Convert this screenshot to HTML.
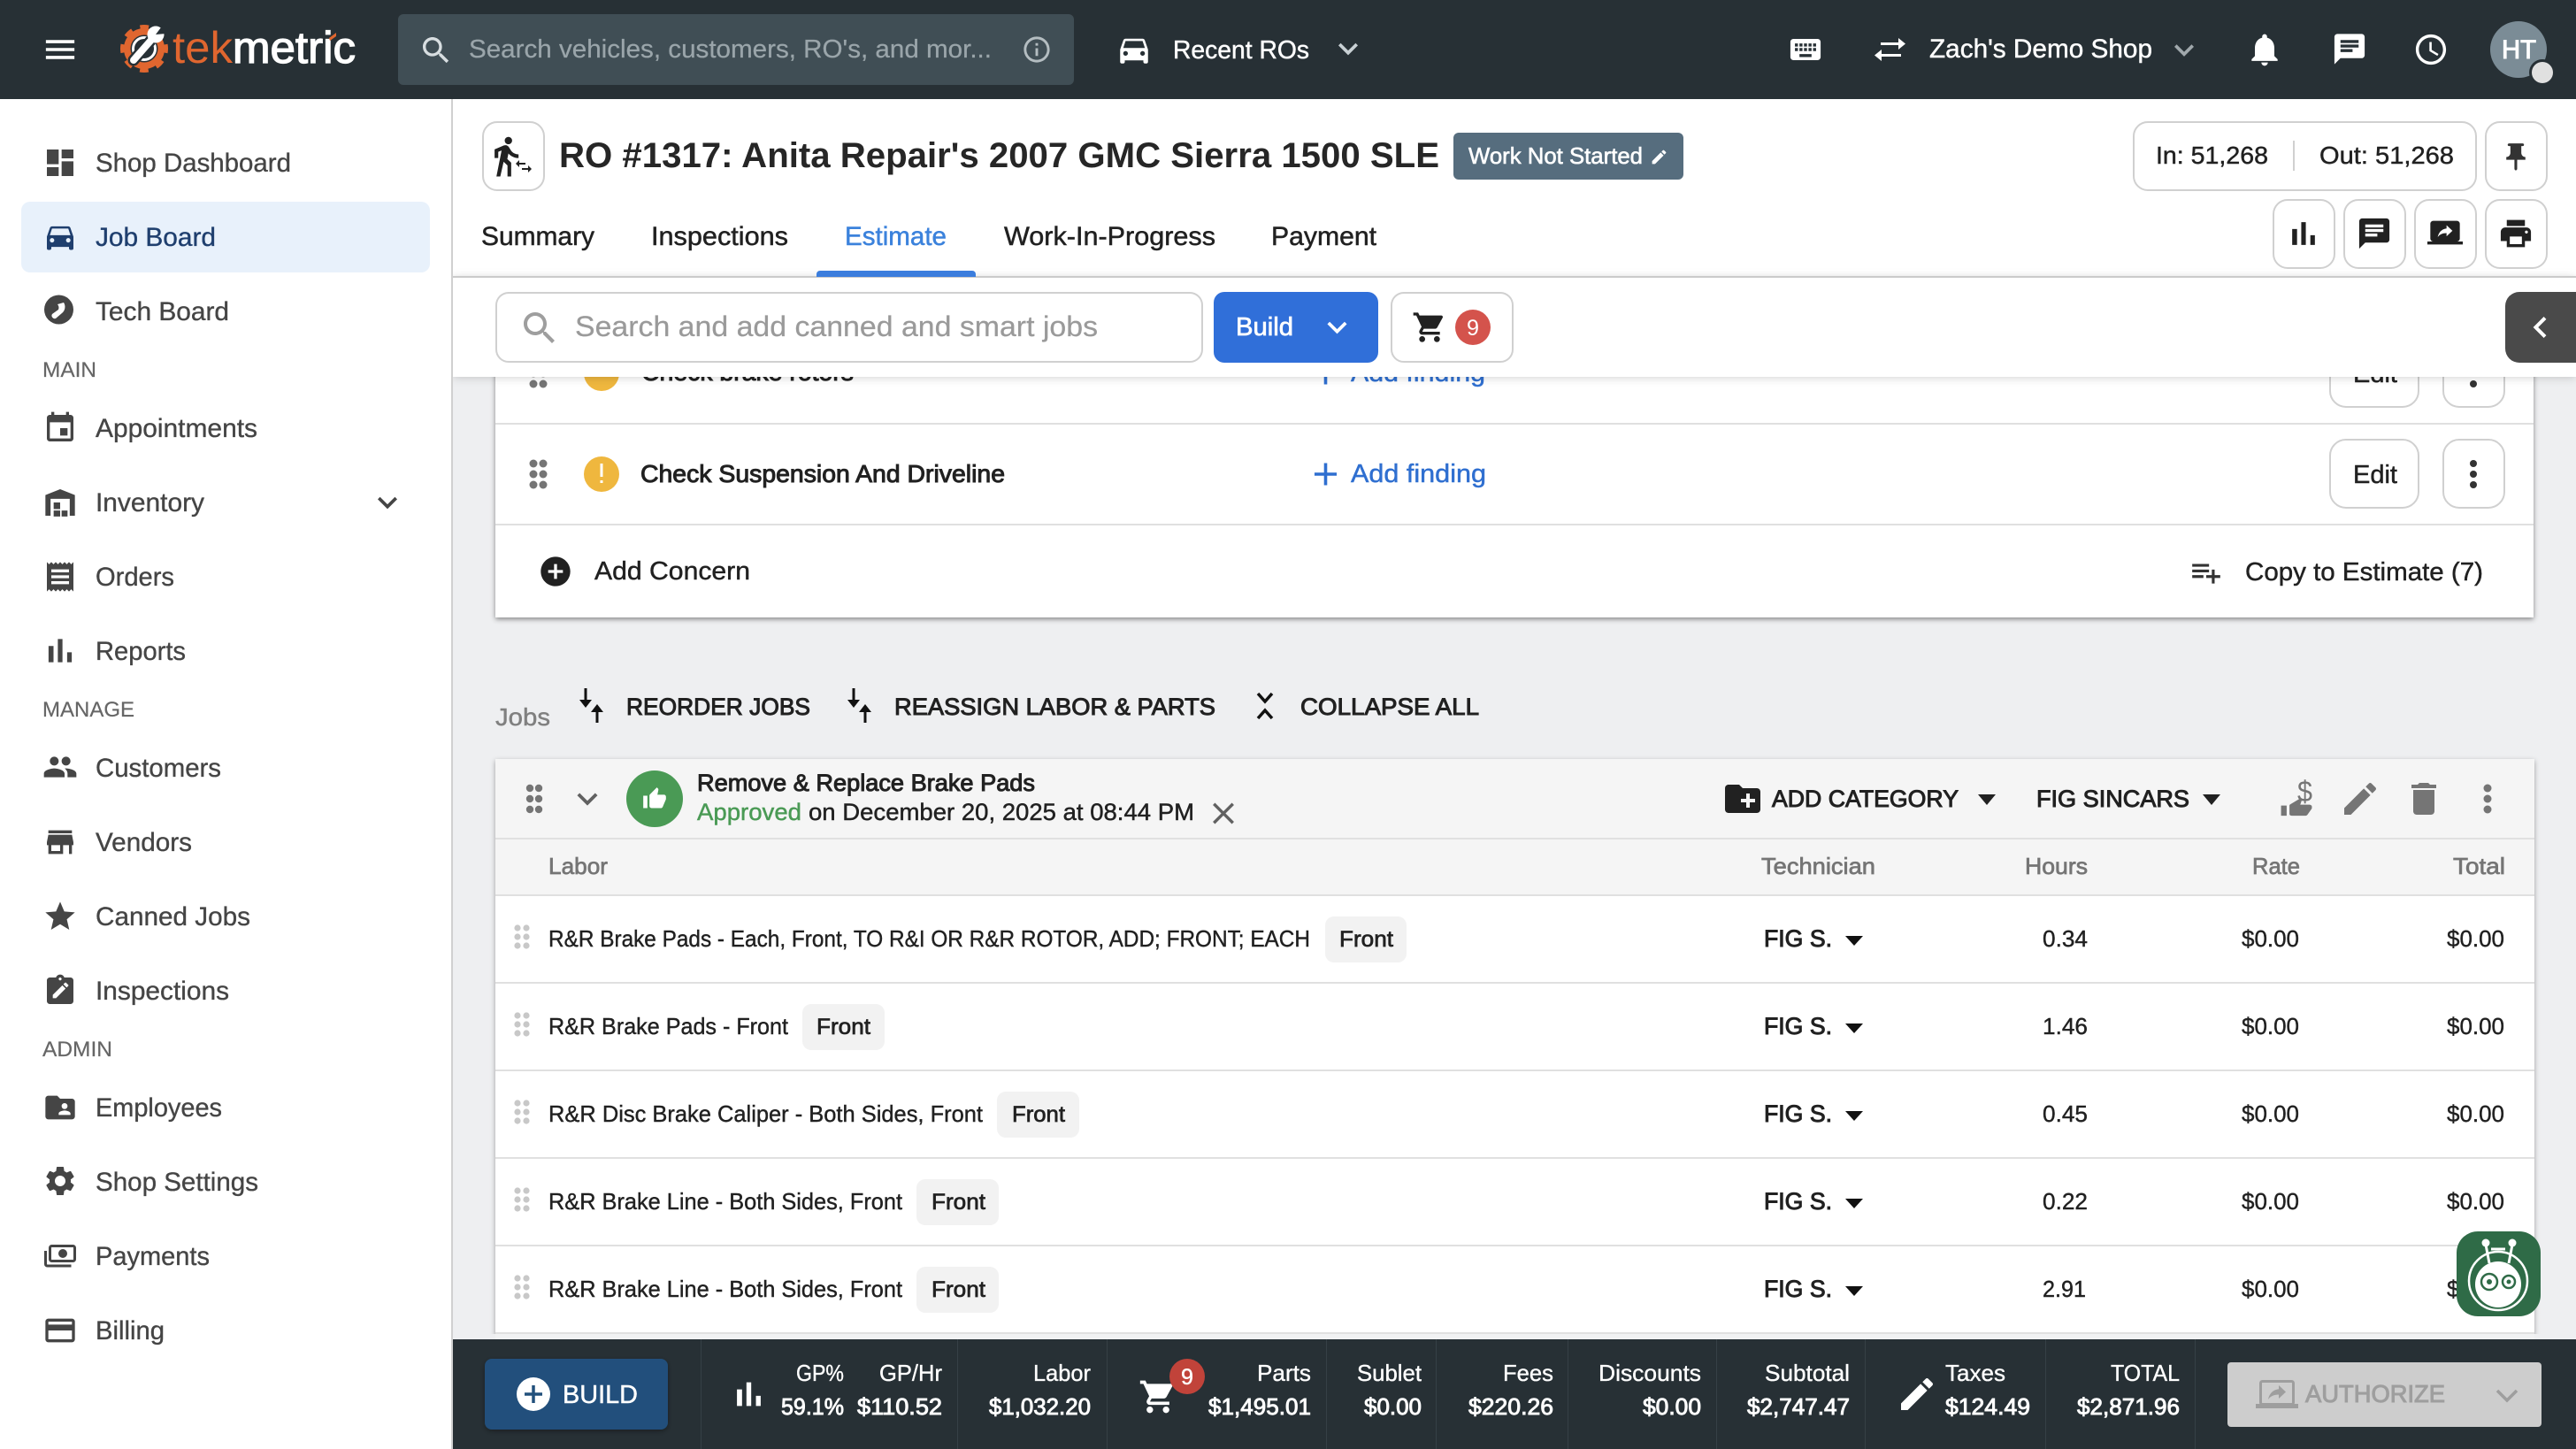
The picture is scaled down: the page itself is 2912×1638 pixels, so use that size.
<!DOCTYPE html>
<html lang="en"><head><meta charset="utf-8"><title>Tekmetric – RO #1317 Estimate</title>
<style>
html,body{margin:0;padding:0;background:#eeeff1;width:2912px;height:1638px;overflow:hidden}
svg.page{display:block;width:2912px;height:1638px}
text{font-family:"Liberation Sans",sans-serif;fill:currentColor;stroke:currentColor;stroke-width:0;white-space:pre}
.m{stroke-width:1}.l{stroke-width:.45}.b{font-weight:700}
.nav{font-size:30px;color:#454545;stroke-width:.35}.sec{font-size:24px;color:#666;stroke-width:.2}
.tab{font-size:30px;color:#212121;stroke-width:.5}
.row{font-size:26px;color:#212121;stroke-width:.4}
.chip{font-size:25px;color:#212121;stroke-width:.7}
.th{font-size:26px;color:#757575;stroke-width:.7}
.bl{font-size:26px;color:#fff;stroke-width:.35}.bv{font-size:26px;color:#fff;stroke-width:.9}
.act{font-size:27px;color:#212121;stroke-width:1}
</style></head><body>
<svg class="page" xmlns="http://www.w3.org/2000/svg" viewBox="0 0 2912 1638">
<defs>
<filter id="sh" x="-2%" y="-10%" width="104%" height="125%"><feDropShadow dx="0" dy="2" stdDeviation="3" flood-color="#000" flood-opacity=".45"/></filter>
<filter id="sh2" x="-2%" y="-10%" width="104%" height="130%"><feDropShadow dx="0" dy="1" stdDeviation="5" flood-color="#000" flood-opacity=".18"/></filter>
<filter id="sh3" x="-5%" y="-5%" width="110%" height="115%"><feDropShadow dx="0" dy="2" stdDeviation="3" flood-color="#000" flood-opacity=".35"/></filter>
</defs>
<rect width="2912" height="1638" fill="#eeeff1"/>

<!-- concern card -->
<rect x="560" y="400" width="2304" height="298" fill="#fff" filter="url(#sh)"/>
<g fill="#757575"><circle cx="603" cy="410" r="4.5"/><circle cx="614" cy="410" r="4.5"/><circle cx="603" cy="422" r="4.5"/><circle cx="614" cy="422" r="4.5"/><circle cx="603" cy="434" r="4.5"/><circle cx="614" cy="434" r="4.5"/></g>
<circle cx="680" cy="422" r="20" fill="#efb73e"/>
<text x="725" y="430" font-size="28" textLength="240" lengthAdjust="spacingAndGlyphs" class="m" style="color:#212121">Check brake rotors</text>
<svg x="1477" y="400.5" width="43" height="43" viewBox="0 0 24 24"><path fill="#2f6fd0" d="M19 13h-6v6h-2v-6H5v-2h6V5h2v6h6v2z"/></svg>
<text x="1527" y="431" font-size="29" textLength="152" lengthAdjust="spacingAndGlyphs" class="l" style="color:#2f6fd0">Add finding</text>
<rect x="2634" y="383" width="100" height="77" rx="18" fill="#fff" stroke="#d0d0d0" stroke-width="2"/>
<text x="2660" y="432" font-size="29" textLength="50" lengthAdjust="spacingAndGlyphs" class="l" style="color:#212121">Edit</text>
<rect x="2762" y="383" width="69" height="77" rx="18" fill="#fff" stroke="#d0d0d0" stroke-width="2"/>
<g fill="#333"><circle cx="2796" cy="410" r="4"/><circle cx="2796" cy="422" r="4"/><circle cx="2796" cy="434" r="4"/></g>
<rect x="560" y="478" width="2304" height="2" fill="#e0e0e0"/>
<g fill="#757575"><circle cx="603" cy="524" r="4.5"/><circle cx="614" cy="524" r="4.5"/><circle cx="603" cy="536" r="4.5"/><circle cx="614" cy="536" r="4.5"/><circle cx="603" cy="548" r="4.5"/><circle cx="614" cy="548" r="4.5"/></g>
<circle cx="680" cy="536" r="20" fill="#efb73e"/>
<rect x="678.5" y="524" width="3" height="15" fill="#fff"/><rect x="678.5" y="543" width="3" height="3" fill="#fff"/>
<text x="724" y="545" font-size="28" textLength="412" lengthAdjust="spacingAndGlyphs" class="m" style="color:#212121">Check Suspension And Driveline</text>
<svg x="1477" y="514.5" width="43" height="43" viewBox="0 0 24 24"><path fill="#2f6fd0" d="M19 13h-6v6h-2v-6H5v-2h6V5h2v6h6v2z"/></svg>
<text x="1527" y="545" font-size="29" textLength="153" lengthAdjust="spacingAndGlyphs" class="l" style="color:#2f6fd0">Add finding</text>
<rect x="2634" y="497" width="100" height="77" rx="18" fill="#fff" stroke="#d0d0d0" stroke-width="2"/>
<text x="2660" y="546" font-size="29" textLength="50" lengthAdjust="spacingAndGlyphs" class="l" style="color:#212121">Edit</text>
<rect x="2762" y="497" width="69" height="77" rx="18" fill="#fff" stroke="#d0d0d0" stroke-width="2"/>
<g fill="#333"><circle cx="2796" cy="524" r="4"/><circle cx="2796" cy="536" r="4"/><circle cx="2796" cy="548" r="4"/></g>
<rect x="560" y="592" width="2304" height="2" fill="#e0e0e0"/>
<svg x="608" y="626" width="40" height="40" viewBox="0 0 24 24"><path fill="#212121" d="M12 2C6.48 2 2 6.48 2 12s4.48 10 10 10 10-4.48 10-10S17.52 2 12 2zm5 11h-4v4h-2v-4H7v-2h4V7h2v4h4v2z"/></svg>
<text x="672" y="655" font-size="29" textLength="176" lengthAdjust="spacingAndGlyphs" class="l" style="color:#212121">Add Concern</text>
<svg x="2475" y="628" width="38" height="38" viewBox="0 0 24 24"><path fill="#333" d="M14 10H2v2h12v-2zm0-4H2v2h12V6zm4 8v-4h-2v4h-4v2h4v4h2v-4h4v-2h-4zM2 16h8v-2H2v2z"/></svg>
<text x="2538" y="656" font-size="29" textLength="269" lengthAdjust="spacingAndGlyphs" class="l" style="color:#212121">Copy to Estimate (7)</text>

<!-- jobs actions -->
<text x="560" y="820" font-size="28" textLength="62" lengthAdjust="spacingAndGlyphs" class="l" style="color:#808080">Jobs</text>
<g fill="#111" stroke="#111">
<path d="M662 778V792" stroke-width="3"/><path d="M655 791h14l-7 9z" stroke="none"/><path d="M675 803V817" stroke-width="3"/><path d="M668 805h14l-7-9z" stroke="none"/>
<path d="M965 778V792" stroke-width="3"/><path d="M958 791h14l-7 9z" stroke="none"/><path d="M978 803V817" stroke-width="3"/><path d="M971 805h14l-7-9z" stroke="none"/>
</g>
<path d="M1422 784l8 9 8-9M1422 812l8-9 8 9" fill="none" stroke="#111" stroke-width="3.5"/>
<text x="708" y="808" textLength="208" lengthAdjust="spacingAndGlyphs" class="act">REORDER JOBS</text>
<text x="1011" y="808" textLength="363" lengthAdjust="spacingAndGlyphs" class="act">REASSIGN LABOR &amp; PARTS</text>
<text x="1470" y="808" textLength="202" lengthAdjust="spacingAndGlyphs" class="act">COLLAPSE ALL</text>

<!-- job card -->
<rect x="560" y="858" width="2305" height="670" fill="#fff" filter="url(#sh3)"/>
<rect x="560" y="858" width="2305" height="154" fill="#f5f5f5"/>
<rect x="560" y="947" width="2305" height="2" fill="#e0e0e0"/>
<rect x="560" y="1011" width="2305" height="2" fill="#e0e0e0"/>
<g fill="#757575"><circle cx="599" cy="891" r="4.2"/><circle cx="609" cy="891" r="4.2"/><circle cx="599" cy="903" r="4.2"/><circle cx="609" cy="903" r="4.2"/><circle cx="599" cy="915" r="4.2"/><circle cx="609" cy="915" r="4.2"/></g>
<svg x="641" y="880" width="46" height="46" viewBox="0 0 24 24"><path fill="#616161" d="M16.59 8.59L12 13.17 7.41 8.59 6 10l6 6 6-6z"/></svg>
<circle cx="740" cy="903" r="32" fill="#4a9a55"/>
<svg x="726" y="889" width="28" height="28" viewBox="0 0 24 24"><path fill="#fff" d="M1 21h4V9H1v12zm22-11c0-1.1-.9-2-2-2h-6.31l.95-4.57.03-.32c0-.41-.17-.79-.44-1.06L14.17 1 7.59 7.59C7.22 7.95 7 8.45 7 9v10c0 1.1.9 2 2 2h9c.83 0 1.54-.5 1.84-1.22l3.02-7.05c.09-.23.14-.47.14-.73v-2z"/></svg>
<text x="788" y="894" font-size="27" textLength="382" lengthAdjust="spacingAndGlyphs" class="m" style="color:#212121">Remove &amp; Replace Brake Pads</text>
<text x="788" y="927" font-size="27" textLength="118" lengthAdjust="spacingAndGlyphs" class="l" style="color:#4a9a55">Approved</text>
<text x="914" y="927" font-size="27" textLength="436" lengthAdjust="spacingAndGlyphs" class="l" style="color:#212121">on December 20, 2025 at 08:44 PM</text>
<svg x="1362.5" y="899" width="41" height="41" viewBox="0 0 24 24"><path fill="#616161" d="M19 6.41L17.59 5 12 10.59 6.41 5 5 6.41 10.59 12 5 17.59 6.41 19 12 13.41 17.59 19 19 17.59 13.41 12z"/></svg>

<svg x="1946" y="879" width="48" height="48" viewBox="0 0 24 24"><path fill="#212121" d="M20 6h-8l-2-2H4c-1.11 0-1.99.89-1.99 2L2 18c0 1.11.89 2 2 2h16c1.11 0 2-.89 2-2V8c0-1.11-.89-2-2-2zm-1 8h-3v3h-2v-3h-3v-2h3V9h2v3h3v2z"/></svg>
<text x="2003" y="912" textLength="211" lengthAdjust="spacingAndGlyphs" class="act">ADD CATEGORY</text>
<path d="M2236 898h20l-10 12z" fill="#212121"/>
<text x="2302" y="912" textLength="173" lengthAdjust="spacingAndGlyphs" class="act">FIG SINCARS</text>
<path d="M2490 898h20l-10 12z" fill="#212121"/>
<text x="2597" y="906" font-size="33" textLength="17" lengthAdjust="spacingAndGlyphs" style="color:#757575">$</text>
<svg x="2577" y="902" width="38" height="23" viewBox="0 0 24 24" preserveAspectRatio="none"><path fill="#757575" d="M1 21h4V9H1v12zm22-11c0-1.1-.9-2-2-2h-6.31l.95-4.57.03-.32c0-.41-.17-.79-.44-1.06L14.17 1 7.59 7.59C7.22 7.95 7 8.45 7 9v10c0 1.1.9 2 2 2h9c.83 0 1.54-.5 1.84-1.22l3.02-7.05c.09-.23.14-.47.14-.73v-2z"/></svg>
<svg x="2644" y="879" width="48" height="48" viewBox="0 0 24 24"><path fill="#757575" d="M3 17.25V21h3.75L17.81 9.94l-3.75-3.75L3 17.25zM20.71 7.04c.39-.39.39-1.02 0-1.41l-2.34-2.34c-.39-.39-1.02-.39-1.41 0l-1.83 1.83 3.75 3.75 1.83-1.83z"/></svg>
<svg x="2716" y="879" width="48" height="48" viewBox="0 0 24 24"><path fill="#757575" d="M6 19c0 1.1.9 2 2 2h8c1.1 0 2-.9 2-2V7H6v12zM19 4h-3.5l-1-1h-5l-1 1H5v2h14V4z"/></svg>
<g fill="#757575"><circle cx="2812" cy="891" r="4.5"/><circle cx="2812" cy="903" r="4.5"/><circle cx="2812" cy="915" r="4.5"/></g>

<text x="620" y="988" textLength="67" lengthAdjust="spacingAndGlyphs" class="th">Labor</text>
<text x="1991" y="988" textLength="129" lengthAdjust="spacingAndGlyphs" class="th">Technician</text>
<text x="2289" y="988" textLength="71" lengthAdjust="spacingAndGlyphs" class="th">Hours</text>
<text x="2546" y="988" textLength="54" lengthAdjust="spacingAndGlyphs" class="th">Rate</text>
<text x="2773" y="988" textLength="59" lengthAdjust="spacingAndGlyphs" class="th">Total</text>

<!-- rows -->
<g fill="#e0e0e0"><rect x="560" y="1110" width="2305" height="2"/><rect x="560" y="1209" width="2305" height="2"/><rect x="560" y="1308" width="2305" height="2"/><rect x="560" y="1407" width="2305" height="2"/><rect x="560" y="1506" width="2305" height="2"/></g>
<g fill="#c8c8c8">
<circle cx="585" cy="1049" r="3.6"/><circle cx="595" cy="1049" r="3.6"/><circle cx="585" cy="1059" r="3.6"/><circle cx="595" cy="1059" r="3.6"/><circle cx="585" cy="1069" r="3.6"/><circle cx="595" cy="1069" r="3.6"/>
<circle cx="585" cy="1148" r="3.6"/><circle cx="595" cy="1148" r="3.6"/><circle cx="585" cy="1158" r="3.6"/><circle cx="595" cy="1158" r="3.6"/><circle cx="585" cy="1168" r="3.6"/><circle cx="595" cy="1168" r="3.6"/>
<circle cx="585" cy="1247" r="3.6"/><circle cx="595" cy="1247" r="3.6"/><circle cx="585" cy="1257" r="3.6"/><circle cx="595" cy="1257" r="3.6"/><circle cx="585" cy="1267" r="3.6"/><circle cx="595" cy="1267" r="3.6"/>
<circle cx="585" cy="1346" r="3.6"/><circle cx="595" cy="1346" r="3.6"/><circle cx="585" cy="1356" r="3.6"/><circle cx="595" cy="1356" r="3.6"/><circle cx="585" cy="1366" r="3.6"/><circle cx="595" cy="1366" r="3.6"/>
<circle cx="585" cy="1445" r="3.6"/><circle cx="595" cy="1445" r="3.6"/><circle cx="585" cy="1455" r="3.6"/><circle cx="595" cy="1455" r="3.6"/><circle cx="585" cy="1465" r="3.6"/><circle cx="595" cy="1465" r="3.6"/>
</g>
<g fill="#f2f2f2">
<rect x="1498" y="1036" width="92" height="52" rx="10"/><rect x="907" y="1135" width="93" height="52" rx="10"/><rect x="1127" y="1234" width="93" height="52" rx="10"/><rect x="1036" y="1333" width="93" height="52" rx="10"/><rect x="1036" y="1432" width="93" height="52" rx="10"/>
</g>
<text class="row" x="620" y="1070" textLength="861" lengthAdjust="spacingAndGlyphs">R&amp;R Brake Pads - Each, Front, TO R&amp;I OR R&amp;R ROTOR, ADD; FRONT; EACH</text>
<text class="chip" x="1514" y="1070" textLength="61" lengthAdjust="spacingAndGlyphs">Front</text>
<text class="row" x="620" y="1169" textLength="271" lengthAdjust="spacingAndGlyphs">R&amp;R Brake Pads - Front</text>
<text class="chip" x="923" y="1169" textLength="61" lengthAdjust="spacingAndGlyphs">Front</text>
<text class="row" x="620" y="1268" textLength="491" lengthAdjust="spacingAndGlyphs">R&amp;R Disc Brake Caliper - Both Sides, Front</text>
<text class="chip" x="1144" y="1268" textLength="60" lengthAdjust="spacingAndGlyphs">Front</text>
<text class="row" x="620" y="1367" textLength="400" lengthAdjust="spacingAndGlyphs">R&amp;R Brake Line - Both Sides, Front</text>
<text class="chip" x="1053" y="1367" textLength="61" lengthAdjust="spacingAndGlyphs">Front</text>
<text class="row" x="620" y="1466" textLength="400" lengthAdjust="spacingAndGlyphs">R&amp;R Brake Line - Both Sides, Front</text>
<text class="chip" x="1053" y="1466" textLength="61" lengthAdjust="spacingAndGlyphs">Front</text>
<g>
<text x="1994" y="1070" font-size="27" textLength="77" lengthAdjust="spacingAndGlyphs" class="m" style="color:#212121">FIG S.</text><path d="M2086 1058h20l-10 11z" fill="#111"/>
<text x="1994" y="1169" font-size="27" textLength="77" lengthAdjust="spacingAndGlyphs" class="m" style="color:#212121">FIG S.</text><path d="M2086 1157h20l-10 11z" fill="#111"/>
<text x="1994" y="1268" font-size="27" textLength="77" lengthAdjust="spacingAndGlyphs" class="m" style="color:#212121">FIG S.</text><path d="M2086 1256h20l-10 11z" fill="#111"/>
<text x="1994" y="1367" font-size="27" textLength="77" lengthAdjust="spacingAndGlyphs" class="m" style="color:#212121">FIG S.</text><path d="M2086 1355h20l-10 11z" fill="#111"/>
<text x="1994" y="1466" font-size="27" textLength="77" lengthAdjust="spacingAndGlyphs" class="m" style="color:#212121">FIG S.</text><path d="M2086 1454h20l-10 11z" fill="#111"/>
<text class="row" x="2309" y="1070" textLength="51" lengthAdjust="spacingAndGlyphs">0.34</text>
<text class="row" x="2309" y="1169" textLength="51" lengthAdjust="spacingAndGlyphs">1.46</text>
<text class="row" x="2309" y="1268" textLength="51" lengthAdjust="spacingAndGlyphs">0.45</text>
<text class="row" x="2309" y="1367" textLength="51" lengthAdjust="spacingAndGlyphs">0.22</text>
<text class="row" x="2309" y="1466" textLength="49" lengthAdjust="spacingAndGlyphs">2.91</text>
<text class="row" x="2534" y="1070" textLength="65" lengthAdjust="spacingAndGlyphs">$0.00</text>
<text class="row" x="2534" y="1169" textLength="65" lengthAdjust="spacingAndGlyphs">$0.00</text>
<text class="row" x="2534" y="1268" textLength="65" lengthAdjust="spacingAndGlyphs">$0.00</text>
<text class="row" x="2534" y="1367" textLength="65" lengthAdjust="spacingAndGlyphs">$0.00</text>
<text class="row" x="2534" y="1466" textLength="65" lengthAdjust="spacingAndGlyphs">$0.00</text>
<text class="row" x="2766" y="1070" textLength="65" lengthAdjust="spacingAndGlyphs">$0.00</text>
<text class="row" x="2766" y="1169" textLength="65" lengthAdjust="spacingAndGlyphs">$0.00</text>
<text class="row" x="2766" y="1268" textLength="65" lengthAdjust="spacingAndGlyphs">$0.00</text>
<text class="row" x="2766" y="1367" textLength="65" lengthAdjust="spacingAndGlyphs">$0.00</text>
<text class="row" x="2766" y="1466" textLength="65" lengthAdjust="spacingAndGlyphs">$0.00</text>
</g>
<rect x="512" y="1508" width="2400" height="6" fill="#eeeff1"/>
<rect x="560" y="1508" width="2305" height="6" fill="#f1f2f3"/>

<!-- header white area -->
<rect x="512" y="112" width="2400" height="201" fill="#fff"/>
<rect x="512" y="313" width="2400" height="113" fill="#fff" filter="url(#sh2)"/>
<rect x="512" y="312" width="2400" height="2" fill="#cbcbcb"/>

<rect x="546" y="138" width="69" height="77" rx="16" fill="#fff" stroke="#d0d0d0" stroke-width="2"/>
<svg x="546.6" y="151.6" width="50" height="50" viewBox="0 0 24 24"><path fill="#212121" d="M13.5 5.5c1.1 0 2-.9 2-2s-.9-2-2-2-2 .9-2 2 .9 2 2 2zM9.8 8.9L7 23h2.1l1.8-8 2.1 2v6h2v-7.5l-2.1-2 .6-3C14.8 12 16.8 13 19 13v-2c-1.9 0-3.5-1-4.3-2.4l-1-1.6c-.4-.6-1-1-1.7-1-.3 0-.5.1-.8.1L6 8.3V13h2V9.6l1.8-.7"/></svg>
<svg x="580" y="176" width="24" height="24" viewBox="0 0 24 24"><path fill="#212121" d="M6.99 11L3 15l3.99 4v-3H14v-2H6.99v-3zM21 9l-4-4v3h-7v2h7v3l4-4z" transform="translate(0 24) scale(1 -1)"/></svg>
<text x="632" y="189" font-size="40" textLength="995" lengthAdjust="spacingAndGlyphs" class="b" style="color:#262626">RO #1317: Anita Repair's 2007 GMC Sierra 1500 SLE</text>
<rect x="1643" y="150" width="260" height="53" rx="6" fill="#566d7e"/>
<text x="1660" y="185" font-size="26" textLength="197" lengthAdjust="spacingAndGlyphs" class="m" style="color:#fff;stroke-width:.6">Work Not Started</text>
<svg x="1865" y="167" width="21" height="21" viewBox="0 0 24 24"><path fill="#fff" d="M3 17.25V21h3.75L17.81 9.94l-3.75-3.75L3 17.25zM20.71 7.04c.39-.39.39-1.02 0-1.41l-2.34-2.34c-.39-.39-1.02-.39-1.41 0l-1.83 1.83 3.75 3.75 1.83-1.83z"/></svg>

<rect x="2412" y="138" width="387" height="77" rx="16" fill="#fff" stroke="#d0d0d0" stroke-width="2"/>
<text x="2437" y="185" font-size="28" textLength="127" lengthAdjust="spacingAndGlyphs" class="l" style="color:#212121">In: 51,268</text>
<rect x="2592" y="159" width="2" height="34" fill="#d0d0d0"/>
<text x="2622" y="185" font-size="28" textLength="152" lengthAdjust="spacingAndGlyphs" class="l" style="color:#212121">Out: 51,268</text>
<rect x="2810" y="138" width="69" height="77" rx="16" fill="#fff" stroke="#d0d0d0" stroke-width="2"/>
<svg x="2825.5" y="159" width="37" height="37" viewBox="0 0 24 24"><path fill="#333" d="M16 9V4l1 0c.55 0 1-.45 1-1s-.45-1-1-1H7c-.55 0-1 .45-1 1s.45 1 1 1l1 0v5c0 1.66-1.34 3-3 3v2h5.97v7l1 1 1-1v-7H19v-2c-1.66 0-3-1.34-3-3z"/></svg>
<g fill="#fff" stroke="#d0d0d0" stroke-width="2"><rect x="2570" y="226" width="69" height="77" rx="16"/><rect x="2650" y="226" width="69" height="77" rx="16"/><rect x="2730" y="226" width="69" height="77" rx="16"/><rect x="2810" y="226" width="69" height="77" rx="16"/></g>
<svg x="2582" y="242" width="44" height="44" viewBox="0 0 24 24"><path fill="#212121" d="M5 9.2h3V19H5zM10.6 5h2.8v14h-2.8zm5.6 8H19v6h-2.8z"/></svg>
<svg x="2663.5" y="243.5" width="41" height="41" viewBox="0 0 24 24"><path fill="#212121" d="M20 2H4c-1.1 0-2 .9-2 2v18l4-4h14c1.1 0 2-.9 2-2V4c0-1.1-.9-2-2-2zM6 9h12v2H6V9zm8 5H6v-2h8v2zm4-6H6V6h12v2z"/></svg>
<svg x="2744" y="243" width="40" height="40" viewBox="0 0 24 24"><path fill="#212121" d="M20 18c1.1 0 1.99-.9 1.99-2L22 6c0-1.11-.9-2-2-2H4c-1.11 0-2 .89-2 2v10c0 1.1.89 2 2 2H0v2h24v-2h-4zm-7-3.53v-2.19c-2.78 0-4.61.85-6 2.72.56-2.67 2.11-5.33 6-5.87V7l4 3.73-4 3.74z"/></svg>
<svg x="2823.5" y="243.5" width="41" height="41" viewBox="0 0 24 24"><path fill="#212121" d="M19 8H5c-1.66 0-3 1.34-3 3v6h4v4h12v-4h4v-6c0-1.66-1.34-3-3-3zm-3 11H8v-5h8v5zm3-7c-.55 0-1-.45-1-1s.45-1 1-1 1 .45 1 1-.45 1-1 1zm-1-9H6v4h12V3z"/></svg>

<text class="tab" x="544" y="277" textLength="128" lengthAdjust="spacingAndGlyphs">Summary</text>
<text class="tab" x="736" y="277" textLength="155" lengthAdjust="spacingAndGlyphs">Inspections</text>
<text class="tab" x="955" y="277" textLength="115" lengthAdjust="spacingAndGlyphs" style="color:#3b82dc">Estimate</text>
<text class="tab" x="1135" y="277" textLength="239" lengthAdjust="spacingAndGlyphs">Work-In-Progress</text>
<text class="tab" x="1437" y="277" textLength="119" lengthAdjust="spacingAndGlyphs">Payment</text>
<path d="M923 313v-3a4 4 0 0 1 4-4h172a4 4 0 0 1 4 4v3z" fill="#3b7ddd"/>

<!-- search row -->
<rect x="561" y="331" width="798" height="78" rx="14" fill="#fff" stroke="#d0d0d0" stroke-width="2"/>
<svg x="586" y="347" width="48" height="48" viewBox="0 0 24 24"><path fill="#9e9e9e" d="M15.5 14h-.79l-.28-.27C15.41 12.59 16 11.11 16 9.5 16 5.91 13.09 3 9.5 3S3 5.91 3 9.5 5.91 16 9.5 16c1.61 0 3.09-.59 4.23-1.57l.27.28v.79l5 4.99L20.49 19l-4.99-5zm-6 0C7.01 14 5 11.99 5 9.5S7.01 5 9.5 5 14 7.01 14 9.5 11.99 14 9.5 14z"/></svg>
<text x="650" y="380" font-size="32" textLength="591" lengthAdjust="spacingAndGlyphs" class="l" style="color:#9a9a9a;stroke-width:.25">Search and add canned and smart jobs</text>
<rect x="1372" y="330" width="186" height="80" rx="12" fill="#306fd9"/>
<text x="1397" y="379" font-size="29" textLength="65" lengthAdjust="spacingAndGlyphs" class="m" style="color:#fff;stroke-width:.7">Build</text>
<svg x="1489.5" y="348" width="44" height="44" viewBox="0 0 24 24"><path fill="#fff" d="M16.59 8.59L12 13.17 7.41 8.59 6 10l6 6 6-6z"/></svg>
<rect x="1573" y="331" width="137" height="78" rx="14" fill="#fff" stroke="#d0d0d0" stroke-width="2"/>
<svg x="1596" y="350" width="40" height="40" viewBox="0 0 24 24"><path fill="#212121" d="M7 18c-1.1 0-1.99.9-1.99 2S5.9 22 7 22s2-.9 2-2-.9-2-2-2zM1 2v2h2l3.6 7.59-1.35 2.45c-.16.28-.25.61-.25.96 0 1.1.9 2 2 2h12v-2H7.42c-.14 0-.25-.11-.25-.25l.03-.12.9-1.63h7.45c.75 0 1.41-.41 1.75-1.03l3.58-6.49c.08-.14.12-.31.12-.48 0-.55-.45-1-1-1H5.21l-.94-2H1zm16 16c-1.1 0-1.99.9-1.99 2s.89 2 1.99 2 2-.9 2-2-.9-2-2-2z"/></svg>
<circle cx="1665" cy="370" r="20" fill="#d4534c"/>
<text x="1658" y="379" font-size="25" textLength="14" lengthAdjust="spacingAndGlyphs" style="color:#fff">9</text>
<path d="M2912 330h-64a16 16 0 0 0-16 16v48a16 16 0 0 0 16 16h64z" fill="#4a4a4a"/>
<svg x="2847.6" y="346" width="48" height="48" viewBox="0 0 24 24"><path fill="#fff" d="M15.41 7.41L14 6l-6 6 6 6 1.41-1.41L10.83 12z"/></svg>

<!-- top bar -->
<rect width="2912" height="112" fill="#273035"/>
<svg x="46.5" y="34.5" width="43" height="43" viewBox="0 0 24 24"><path fill="#fff" d="M3 18h18v-2H3v2zm0-5h18v-2H3v2zm0-7v2h18V6H3z"/></svg>
<!-- logo -->
<circle cx="163" cy="55" r="23.5" fill="none" stroke="#e0662f" stroke-width="7" stroke-dasharray="9.2 9.26" transform="rotate(-11.2 163 55)"/>
<circle cx="163" cy="55" r="19" fill="none" stroke="#e0662f" stroke-width="8"/>
<circle cx="163" cy="55" r="15.5" fill="#273035"/>
<circle cx="163" cy="55" r="12.5" fill="none" stroke="#fff" stroke-width="3"/>
<path d="M151 68L172 44" stroke="#273035" stroke-width="13" stroke-linecap="round"/>
<path d="M151 68L172 44" stroke="#fff" stroke-width="8" stroke-linecap="round"/>
<circle cx="176" cy="39" r="9.5" fill="#fff"/>
<path d="M176 39l9-12 6 4-3 7z" fill="#273035"/>
<text x="195" y="71" font-size="50" textLength="68" lengthAdjust="spacingAndGlyphs" style="color:#e0662f">tek</text>
<text x="263" y="71" font-size="50" textLength="139" lengthAdjust="spacingAndGlyphs" class="m" style="color:#fff;stroke-width:1.3">metric</text>
<path d="M372 43l8-6v4l-7 5z" fill="#e0662f"/>

<rect x="450" y="16" width="764" height="80" rx="6" fill="#404e55"/>
<svg x="473" y="37" width="40" height="40" viewBox="0 0 24 24"><path fill="#d8dee1" d="M15.5 14h-.79l-.28-.27C15.41 12.59 16 11.11 16 9.5 16 5.91 13.09 3 9.5 3S3 5.91 3 9.5 5.91 16 9.5 16c1.61 0 3.09-.59 4.23-1.57l.27.28v.79l5 4.99L20.49 19l-4.99-5zm-6 0C7.01 14 5 11.99 5 9.5S7.01 5 9.5 5 14 7.01 14 9.5 11.99 14 9.5 14z"/></svg>
<text x="530" y="65" font-size="29" textLength="591" lengthAdjust="spacingAndGlyphs" class="l" style="color:#9aa5aa;stroke-width:.25">Search vehicles, customers, RO's, and mor...</text>
<svg x="1154.5" y="38.5" width="35" height="35" viewBox="0 0 24 24"><path fill="#b4bdc1" d="M11 7h2v2h-2zm0 4h2v6h-2zm1-9C6.48 2 2 6.48 2 12s4.48 10 10 10 10-4.48 10-10S17.52 2 12 2zm0 18c-4.41 0-8-3.59-8-8s3.59-8 8-8 8 3.59 8 8-3.59 8-8 8z"/></svg>
<svg x="1261" y="35" width="42" height="42" viewBox="0 0 24 24"><path fill="#fff" d="M18.92 6.01C18.72 5.42 18.16 5 17.5 5h-11c-.66 0-1.21.42-1.42 1.01L3 12v8c0 .55.45 1 1 1h1c.55 0 1-.45 1-1v-1h12v1c0 .55.45 1 1 1h1c.55 0 1-.45 1-1v-8l-2.08-5.99zM6.5 16c-.83 0-1.5-.67-1.5-1.5S5.67 13 6.5 13s1.5.67 1.5 1.5S7.33 16 6.5 16zm11 0c-.83 0-1.5-.67-1.5-1.5s.67-1.5 1.5-1.5 1.5.67 1.5 1.5-.67 1.5-1.5 1.5zM5 11l1.5-4.5h11L19 11H5z"/></svg>
<text x="1326" y="66" font-size="29" textLength="154" lengthAdjust="spacingAndGlyphs" class="l" style="color:#fff">Recent ROs</text>
<svg x="1502" y="33" width="44" height="44" viewBox="0 0 24 24"><path fill="#c8d0d4" d="M16.59 8.59L12 13.17 7.41 8.59 6 10l6 6 6-6z"/></svg>
<svg x="2020.5" y="35.5" width="41" height="41" viewBox="0 0 24 24"><path fill="#fff" d="M20 5H4c-1.1 0-1.99.9-1.99 2L2 17c0 1.1.9 2 2 2h16c1.1 0 2-.9 2-2V7c0-1.1-.9-2-2-2zm-9 3h2v2h-2V8zm0 3h2v2h-2v-2zM8 8h2v2H8V8zm0 3h2v2H8v-2zm-1 2H5v-2h2v2zm0-3H5V8h2v2zm9 7H8v-2h8v2zm0-4h-2v-2h2v2zm0-3h-2V8h2v2zm3 3h-2v-2h2v2zm0-3h-2V8h2v2z"/></svg>
<path d="M2126 49.5h22M2127 62.5h22" fill="none" stroke="#fff" stroke-width="3"/>
<path d="M2146 43l8 6.5-8 6.5zM2127 56l-8 6.5 8 6.5z" fill="#fff"/>
<text x="2181" y="65" font-size="30" textLength="252" lengthAdjust="spacingAndGlyphs" class="l" style="color:#fff">Zach's Demo Shop</text>
<svg x="2447" y="34.5" width="44" height="44" viewBox="0 0 24 24"><path fill="#a0a8ac" d="M16.59 8.59L12 13.17 7.41 8.59 6 10l6 6 6-6z"/></svg>
<svg x="2538" y="34" width="44" height="44" viewBox="0 0 24 24"><path fill="#fff" d="M12 22c1.1 0 2-.9 2-2h-4c0 1.1.89 2 2 2zm6-6v-5c0-3.07-1.64-5.64-4.5-6.32V4c0-.83-.67-1.5-1.5-1.5s-1.5.67-1.5 1.5v.68C7.63 5.36 6 7.92 6 11v5l-2 2v1h16v-1l-2-2z"/></svg>
<svg x="2635.5" y="35" width="41" height="41" viewBox="0 0 24 24"><path fill="#fff" d="M20 2H4c-1.1 0-2 .9-2 2v18l4-4h14c1.1 0 2-.9 2-2V4c0-1.1-.9-2-2-2zM6 9h12v2H6V9zm8 5H6v-2h8v2zm4-6H6V6h12v2z"/></svg>
<svg x="2727.5" y="35.5" width="41" height="41" viewBox="0 0 24 24"><path fill="#fff" d="M11.99 2C6.47 2 2 6.48 2 12s4.47 10 9.99 10C17.52 22 22 17.52 22 12S17.52 2 11.99 2zM12 20c-4.42 0-8-3.58-8-8s3.58-8 8-8 8 3.58 8 8-3.58 8-8 8zm.5-13H11v6l5.25 3.15.75-1.23-4.5-2.67z"/></svg>
<circle cx="2847" cy="56" r="32" fill="#7b8c96"/>
<text x="2828" y="66" font-size="30" textLength="39" lengthAdjust="spacingAndGlyphs" class="m" style="color:#fff">HT</text>
<circle cx="2874" cy="82" r="15" fill="#273035"/>
<circle cx="2874" cy="82" r="12" fill="#e0e0e0"/>

<!-- sidebar -->
<rect x="0" y="112" width="510" height="1526" fill="#fff"/>
<rect x="510" y="112" width="2" height="1526" fill="#d0d0d0"/>
<rect x="24" y="228" width="462" height="80" rx="10" fill="#e8f1fb"/>
<g fill="#454545">
<svg x="48" y="164" width="40" height="40" viewBox="0 0 24 24"><path d="M3 13h8V3H3v10zm0 8h8v-6H3v6zm10 0h8V11h-8v10zm0-18v6h8V3h-8z"/></svg>
<svg x="48" y="247.5" width="40" height="40" viewBox="0 0 24 24"><path fill="#1f3f6e" d="M18.92 6.01C18.72 5.42 18.16 5 17.5 5h-11c-.66 0-1.21.42-1.42 1.01L3 12v8c0 .55.45 1 1 1h1c.55 0 1-.45 1-1v-1h12v1c0 .55.45 1 1 1h1c.55 0 1-.45 1-1v-8l-2.08-5.99zM6.5 16c-.83 0-1.5-.67-1.5-1.5S5.67 13 6.5 13s1.5.67 1.5 1.5S7.33 16 6.5 16zm11 0c-.83 0-1.5-.67-1.5-1.5s.67-1.5 1.5-1.5 1.5.67 1.5 1.5-.67 1.5-1.5 1.5zM5 11l1.5-4.5h11L19 11H5z"/></svg>
<circle cx="66.5" cy="350" r="16.5"/>
<path d="M72 342a9 9 0 0 1-2 12l-7 6a3.4 3.4 0 0 1-4-5l7-5a6 6 0 0 0-1-6z" fill="#fff"/>
<svg x="48" y="464" width="40" height="40" viewBox="0 0 24 24"><path d="M17 12h-5v5h5v-5zM16 1v2H8V1H6v2H5c-1.11 0-1.99.9-1.99 2L3 19c0 1.1.89 2 2 2h14c1.1 0 2-.9 2-2V5c0-1.1-.9-2-2-2h-1V1h-2zm3 18H5V8h14v11z"/></svg>
<svg x="48" y="548" width="40" height="40" viewBox="0 0 24 24"><path d="M22 21V7L12 3 2 7v14h3.5V9.5h13V21H22zM7.6 12H12v4.5H7.6zM7.6 17.5H12V21.5H7.6zM13 17.5h4v4h-4z"/></svg>
<svg x="48" y="632" width="40" height="40" viewBox="0 0 24 24"><path d="M18 17H6v-2h12v2zm0-4H6v-2h12v2zm0-4H6V7h12v2zM3 22l1.5-1.5L6 22l1.5-1.5L9 22l1.5-1.5L12 22l1.5-1.5L15 22l1.5-1.5L18 22l1.5-1.5L21 22V2l-1.5 1.5L18 2l-1.5 1.5L15 2l-1.5 1.5L12 2l-1.5 1.5L9 2 7.5 3.5 6 2 4.5 3.5 3 2v20z"/></svg>
<svg x="45.5" y="713" width="45" height="45" viewBox="0 0 24 24"><path d="M5 9.2h3V19H5zM10.6 5h2.8v14h-2.8zm5.6 8H19v6h-2.8z"/></svg>
<svg x="48" y="847" width="40" height="40" viewBox="0 0 24 24"><path d="M16 11c1.66 0 2.99-1.34 2.99-3S17.66 5 16 5c-1.66 0-3 1.34-3 3s1.34 3 3 3zm-8 0c1.66 0 2.99-1.34 2.99-3S9.66 5 8 5C6.34 5 5 6.34 5 8s1.34 3 3 3zm0 2c-2.33 0-7 1.17-7 3.5V19h14v-2.5c0-2.33-4.67-3.5-7-3.5zm8 0c-.29 0-.62.02-.97.05 1.16.84 1.97 1.97 1.97 3.45V19h6v-2.5c0-2.33-4.67-3.5-7-3.5z"/></svg>
<svg x="48" y="932" width="40" height="40" viewBox="0 0 24 24"><path d="M20 4H4v2h16V4zm1 10v-2l-1-5H4l-1 5v2h1v6h10v-6h4v6h2v-6h1zm-9 4H6v-4h6v4z"/></svg>
<svg x="48" y="1016" width="40" height="40" viewBox="0 0 24 24"><path d="M12 17.27L18.18 21l-1.64-7.03L22 9.24l-7.19-.61L12 2 9.19 8.63 2 9.24l5.46 4.73L5.82 21z"/></svg>
<svg x="48" y="1100" width="40" height="40" viewBox="0 0 24 24"><path d="M19 3h-4.18C14.4 1.84 13.3 1 12 1c-1.3 0-2.4.84-2.82 2H5c-1.1 0-2 .9-2 2v14c0 1.1.9 2 2 2h14c1.1 0 2-.9 2-2V5c0-1.1-.9-2-2-2zm-7 0c.55 0 1 .45 1 1s-.45 1-1 1-1-.45-1-1 .45-1 1-1z"/><path fill="#fff" d="M7 17v-2.2l6.5-6.5 2.2 2.2L9.2 17H7zm9.4-7.2l-2.2-2.2 1.1-1.1c.2-.2.5-.2.7 0l1.5 1.5c.2.2.2.5 0 .7l-1.1 1.1z"/></svg>
<svg x="48" y="1232" width="40" height="40" viewBox="0 0 24 24"><path d="M20 6h-8l-2-2H4c-1.1 0-1.99.9-1.99 2L2 18c0 1.1.9 2 2 2h16c1.1 0 2-.9 2-2V8c0-1.1-.9-2-2-2zm-5 3c1.1 0 2 .9 2 2s-.9 2-2 2-2-.9-2-2 .9-2 2-2zm4 8h-8v-1c0-1.33 2.67-2 4-2s4 .67 4 2v1z"/></svg>
<svg x="48" y="1315" width="40" height="40" viewBox="0 0 24 24"><path d="M19.14 12.94c.04-.3.06-.61.06-.94 0-.32-.02-.64-.07-.94l2.03-1.58c.18-.14.23-.41.12-.61l-1.92-3.32c-.12-.22-.37-.29-.59-.22l-2.39.96c-.5-.38-1.03-.7-1.62-.94l-.36-2.54c-.04-.24-.24-.41-.48-.41h-3.84c-.24 0-.43.17-.47.41l-.36 2.54c-.59.24-1.13.57-1.62.94l-2.39-.96c-.22-.08-.47 0-.59.22L2.74 8.87c-.12.21-.08.47.12.61l2.03 1.58c-.05.3-.09.63-.09.94s.02.64.07.94l-2.03 1.58c-.18.14-.23.41-.12.61l1.92 3.32c.12.22.37.29.59.22l2.39-.96c.5.38 1.03.7 1.62.94l.36 2.54c.05.24.24.41.48.41h3.84c.24 0 .44-.17.47-.41l.36-2.54c.59-.24 1.13-.56 1.62-.94l2.39.96c.22.08.47 0 .59-.22l1.92-3.32c.12-.22.07-.47-.12-.61l-2.01-1.58zM12 15.6c-1.98 0-3.6-1.62-3.6-3.6s1.62-3.6 3.6-3.6 3.6 1.62 3.6 3.6-1.62 3.6-3.6 3.6z"/></svg>
<rect x="56.5" y="1408.5" width="28" height="17" rx="2" fill="none" stroke="#454545" stroke-width="3"/>
<circle cx="71" cy="1417" r="5"/>
<path d="M51.5 1414v15a2 2 0 0 0 2 2h27" fill="none" stroke="#454545" stroke-width="3"/>
<svg x="48" y="1484" width="40" height="40" viewBox="0 0 24 24"><path d="M20 4H4c-1.11 0-1.99.89-1.99 2L2 18c0 1.11.89 2 2 2h16c1.11 0 2-.89 2-2V6c0-1.11-.89-2-2-2zm0 14H4v-6h16v6zm0-10H4V6h16v2z"/></svg>
<svg x="416" y="546" width="44" height="44" viewBox="0 0 24 24"><path d="M16.59 8.59L12 13.17 7.41 8.59 6 10l6 6 6-6z"/></svg>
</g>
<text class="nav" x="108" y="194" textLength="221" lengthAdjust="spacingAndGlyphs">Shop Dashboard</text>
<text class="nav" x="108" y="278" textLength="136" lengthAdjust="spacingAndGlyphs" style="color:#1f3f6e">Job Board</text>
<text class="nav" x="108" y="362" textLength="151" lengthAdjust="spacingAndGlyphs">Tech Board</text>
<text class="sec" x="48" y="426" textLength="61" lengthAdjust="spacingAndGlyphs">MAIN</text>
<text class="nav" x="108" y="494" textLength="183" lengthAdjust="spacingAndGlyphs">Appointments</text>
<text class="nav" x="108" y="578" textLength="123" lengthAdjust="spacingAndGlyphs">Inventory</text>
<text class="nav" x="108" y="662" textLength="89" lengthAdjust="spacingAndGlyphs">Orders</text>
<text class="nav" x="108" y="746" textLength="102" lengthAdjust="spacingAndGlyphs">Reports</text>
<text class="sec" x="48" y="810" textLength="104" lengthAdjust="spacingAndGlyphs">MANAGE</text>
<text class="nav" x="108" y="878" textLength="142" lengthAdjust="spacingAndGlyphs">Customers</text>
<text class="nav" x="108" y="962" textLength="109" lengthAdjust="spacingAndGlyphs">Vendors</text>
<text class="nav" x="108" y="1046" textLength="175" lengthAdjust="spacingAndGlyphs">Canned Jobs</text>
<text class="nav" x="108" y="1130" textLength="151" lengthAdjust="spacingAndGlyphs">Inspections</text>
<text class="sec" x="48" y="1194" textLength="79" lengthAdjust="spacingAndGlyphs">ADMIN</text>
<text class="nav" x="108" y="1262" textLength="143" lengthAdjust="spacingAndGlyphs">Employees</text>
<text class="nav" x="108" y="1346" textLength="184" lengthAdjust="spacingAndGlyphs">Shop Settings</text>
<text class="nav" x="108" y="1430" textLength="129" lengthAdjust="spacingAndGlyphs">Payments</text>
<text class="nav" x="108" y="1514" textLength="78" lengthAdjust="spacingAndGlyphs">Billing</text>

<!-- bot -->
<rect x="2777" y="1392" width="95" height="96" rx="24" fill="#2f6b47"/>
<circle cx="2824" cy="1448" r="33" fill="none" stroke="#fff" stroke-width="2.5"/>
<circle cx="2824" cy="1452" r="26" fill="#fff"/>
<path d="M2814 1428l-4-21M2836 1428l4-21" stroke="#fff" stroke-width="3"/>
<circle cx="2810" cy="1405" r="4.5" fill="#fff"/><circle cx="2840" cy="1405" r="4.5" fill="#fff"/>
<path d="M2816 1412h16" stroke="#fff" stroke-width="3"/>
<g fill="#fff" stroke="#2f6b47" stroke-width="2.5"><circle cx="2814" cy="1449" r="9"/><circle cx="2836" cy="1449" r="7"/></g>
<circle cx="2814" cy="1449" r="3" fill="#2f6b47"/><circle cx="2836" cy="1449" r="2.5" fill="#2f6b47"/>

<!-- bottom bar -->
<rect x="512" y="1514" width="2400" height="124" fill="#273035"/>
<g fill="#364046"><rect x="792" y="1514" width="1" height="124"/><rect x="1082" y="1514" width="1" height="124"/><rect x="1251" y="1514" width="1" height="124"/><rect x="1499" y="1514" width="1" height="124"/><rect x="1623" y="1514" width="1" height="124"/><rect x="1772" y="1514" width="1" height="124"/><rect x="1940" y="1514" width="1" height="124"/><rect x="2108" y="1514" width="1" height="124"/><rect x="2312" y="1514" width="1" height="124"/><rect x="2481" y="1514" width="1" height="124"/></g>
<rect x="548" y="1536" width="207" height="80" rx="8" fill="#22507c" filter="url(#sh3)"/>
<circle cx="603" cy="1576" r="19" fill="#fff"/>
<path d="M603 1566v20M593 1576h20" stroke="#22507c" stroke-width="3.5"/>
<text x="636" y="1586" font-size="29" textLength="85" lengthAdjust="spacingAndGlyphs" class="l" style="color:#fff">BUILD</text>
<svg x="823.5" y="1553" width="46" height="46" viewBox="0 0 24 24"><path fill="#fff" d="M5 9.2h3V19H5zM10.6 5h2.8v14h-2.8zm5.6 8H19v6h-2.8z"/></svg>
<text class="bl" x="900" y="1561" textLength="54" lengthAdjust="spacingAndGlyphs">GP%</text>
<text class="bl" x="994" y="1561" textLength="71" lengthAdjust="spacingAndGlyphs">GP/Hr</text>
<text class="bv" x="883" y="1599" textLength="71" lengthAdjust="spacingAndGlyphs">59.1%</text>
<text class="bv" x="969" y="1599" textLength="96" lengthAdjust="spacingAndGlyphs">$110.52</text>
<text class="bl" x="1168" y="1561" textLength="65" lengthAdjust="spacingAndGlyphs">Labor</text>
<text class="bv" x="1118" y="1599" textLength="115" lengthAdjust="spacingAndGlyphs">$1,032.20</text>
<svg x="1287" y="1557" width="44" height="44" viewBox="0 0 24 24"><path fill="#fff" d="M7 18c-1.1 0-1.99.9-1.99 2S5.9 22 7 22s2-.9 2-2-.9-2-2-2zM1 2v2h2l3.6 7.59-1.35 2.45c-.16.28-.25.61-.25.96 0 1.1.9 2 2 2h12v-2H7.42c-.14 0-.25-.11-.25-.25l.03-.12.9-1.63h7.45c.75 0 1.41-.41 1.75-1.03l3.58-6.49c.08-.14.12-.31.12-.48 0-.55-.45-1-1-1H5.21l-.94-2H1zm16 16c-1.1 0-1.99.9-1.99 2s.89 2 1.99 2 2-.9 2-2-.9-2-2-2z"/></svg>
<circle cx="1342" cy="1556" r="20" fill="#c1433a"/>
<text x="1335" y="1565" font-size="25" textLength="14" lengthAdjust="spacingAndGlyphs" class="l" style="color:#fff">9</text>
<text class="bl" x="1421" y="1561" textLength="61" lengthAdjust="spacingAndGlyphs">Parts</text>
<text class="bv" x="1366" y="1599" textLength="116" lengthAdjust="spacingAndGlyphs">$1,495.01</text>
<text class="bl" x="1534" y="1561" textLength="73" lengthAdjust="spacingAndGlyphs">Sublet</text>
<text class="bv" x="1542" y="1599" textLength="65" lengthAdjust="spacingAndGlyphs">$0.00</text>
<text class="bl" x="1699" y="1561" textLength="57" lengthAdjust="spacingAndGlyphs">Fees</text>
<text class="bv" x="1660" y="1599" textLength="96" lengthAdjust="spacingAndGlyphs">$220.26</text>
<text class="bl" x="1807" y="1561" textLength="116" lengthAdjust="spacingAndGlyphs">Discounts</text>
<text class="bv" x="1857" y="1599" textLength="66" lengthAdjust="spacingAndGlyphs">$0.00</text>
<text class="bl" x="1995" y="1561" textLength="96" lengthAdjust="spacingAndGlyphs">Subtotal</text>
<text class="bv" x="1975" y="1599" textLength="116" lengthAdjust="spacingAndGlyphs">$2,747.47</text>
<svg x="2143" y="1552" width="48" height="48" viewBox="0 0 24 24"><path fill="#fff" d="M3 17.25V21h3.75L17.81 9.94l-3.75-3.75L3 17.25zM20.71 7.04c.39-.39.39-1.02 0-1.41l-2.34-2.34c-.39-.39-1.02-.39-1.41 0l-1.83 1.83 3.75 3.75 1.83-1.83z"/></svg>
<text class="bl" x="2199" y="1561" textLength="68" lengthAdjust="spacingAndGlyphs">Taxes</text>
<text class="bv" x="2199" y="1599" textLength="96" lengthAdjust="spacingAndGlyphs">$124.49</text>
<text class="bl" x="2386" y="1561" textLength="78" lengthAdjust="spacingAndGlyphs">TOTAL</text>
<text class="bv" x="2348" y="1599" textLength="116" lengthAdjust="spacingAndGlyphs">$2,871.96</text>
<rect x="2518" y="1540" width="355" height="73" rx="4" fill="#cdcdcd"/>
<rect x="2555.5" y="1561.5" width="37" height="26" rx="2" fill="none" stroke="#9e9e9e" stroke-width="3"/>
<rect x="2550" y="1587" width="48" height="5" fill="#9e9e9e"/>
<svg x="2550" y="1552" width="48" height="48" viewBox="0 0 24 24"><path fill="#9e9e9e" d="M13 14.47v-2.19c-2.78 0-4.61.85-6 2.72.56-2.67 2.11-5.33 6-5.87V7l4 3.73-4 3.74z"/></svg>
<text x="2606" y="1585" font-size="28" textLength="158" lengthAdjust="spacingAndGlyphs" class="m" style="color:#9e9e9e">AUTHORIZE</text>
<path d="M2823 1572l11 11 11-11" fill="none" stroke="#9e9e9e" stroke-width="3.5"/>
</svg>
</body></html>
